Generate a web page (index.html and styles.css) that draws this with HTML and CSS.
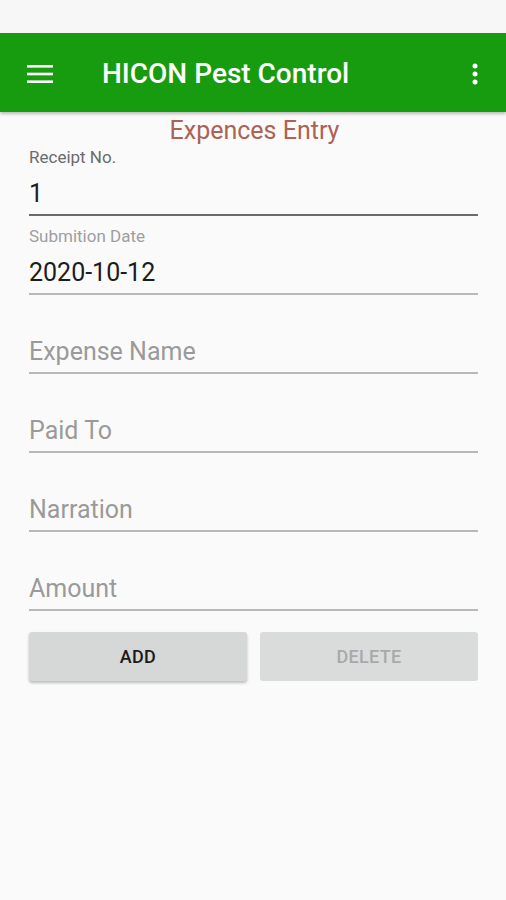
FILE: index.html
```html
<!DOCTYPE html>
<html lang="en">
<head>
  <meta charset="UTF-8" />
  <meta name="viewport" content="width=device-width, initial-scale=1.0" />
  <title>HICON Pest Control | Expences Entry</title>
  <link rel="stylesheet" href="styles.css">
</head>
<body>
  <div class="status-bar"></div>

  <header class="app-bar">
    <button class="icon-btn menu-btn" aria-label="Menu">
      <svg width="26" height="20" viewBox="0 0 26 20">
        <rect x="0" y="1" width="26" height="2.6" fill="#fff" />
        <rect x="0" y="8.7" width="26" height="2.6" fill="#fff" />
        <rect x="0" y="16.4" width="26" height="2.6" fill="#fff" />
      </svg>
    </button>
    <h1 class="app-title">HICON Pest Control</h1>
    <button class="icon-btn more-btn" aria-label="More options">
      <svg width="6" height="22" viewBox="0 0 6 22">
        <circle cx="3" cy="3" r="2.5" fill="#fff" />
        <circle cx="3" cy="11" r="2.5" fill="#fff" />
        <circle cx="3" cy="19" r="2.5" fill="#fff" />
      </svg>
    </button>
  </header>

  <main class="form">
    <h2 class="form-title">Expences Entry</h2>

    <div class="field field-first field-focused">
      <label class="field-label">Receipt No.</label>
      <div class="field-value">1</div>
    </div>

    <div class="field">
      <label class="field-label">Submition Date</label>
      <div class="field-value">2020-10-12</div>
    </div>

    <div class="field">
      <label class="field-label"></label>
      <div class="field-value placeholder">Expense Name</div>
    </div>

    <div class="field">
      <label class="field-label"></label>
      <div class="field-value placeholder">Paid To</div>
    </div>

    <div class="field">
      <label class="field-label"></label>
      <div class="field-value placeholder">Narration</div>
    </div>

    <div class="field">
      <label class="field-label"></label>
      <div class="field-value placeholder">Amount</div>
    </div>

    <div class="actions">
      <button class="btn btn-add">ADD</button>
      <button class="btn btn-delete" disabled>DELETE</button>
    </div>
  </main>
</body>
</html>
```

FILE: styles.css
```css
:root {
  --primary-color: #179b0f;
  --background: #fafafa;
  --heading-color: #ac6254;
  --line-color: #b8b8b8;
  --button-color: #d6d7d7;
}

* {
  box-sizing: border-box;
  margin: 0;
  padding: 0;
}

body {
  font-family: Roboto, 'Noto Sans', sans-serif;
  background: var(--background);
  color: #1c1c1c;
  width: 506px;
  min-height: 900px;
}

.status-bar {
  height: 33px;
  background: #f7f7f7;
}

.app-bar {
  height: 79px;
  background: var(--primary-color);
  display: flex;
  align-items: center;
  padding: 0 28px 0 27px;
  box-shadow: 0 2px 3px rgba(0, 0, 0, 0.25);
  position: relative;
}

.icon-btn {
  background: none;
  border: none;
  display: flex;
  align-items: center;
  cursor: pointer;
}

.menu-btn {
  margin-top: 2px;
}

.app-title {
  flex: 1;
  margin-left: 49px;
  color: #fff;
  font-size: 28px;
  font-weight: 500;
  line-height: 30px;
  margin-top: 2px;
}

.more-btn {
  margin-top: 3px;
}

.form {
  padding: 6px 28px 0 29px;
}

.form-title {
  text-align: center;
  color: var(--heading-color);
  font-size: 25px;
  font-weight: 400;
  line-height: 25px;
  padding-left: 2px;
}

.field {
  padding: 10px 0 5px;
  border-bottom: 2px solid var(--line-color);
}

.field-first {
  padding-top: 4px;
}

.field-focused {
  border-bottom-color: #6a6a6a;
}

.field-label {
  display: block;
  height: 20px;
  font-size: 17px;
  line-height: 20px;
  color: #9e9e9e;
}

.field-focused .field-label {
  color: #6b6b6b;
}

.field-value {
  margin-top: 12px;
  font-size: 25px;
  line-height: 30px;
  height: 30px;
  color: #1c1c1c;
}

.field-value.placeholder {
  color: #9a9a9a;
}

.actions {
  display: flex;
  gap: 13px;
  margin-top: 21px;
}

.btn {
  flex: 1;
  height: 49px;
  border: none;
  border-radius: 3px;
  background: var(--button-color);
  font-family: Roboto, 'Noto Sans', sans-serif;
  font-size: 18px;
  font-weight: 500;
  letter-spacing: 0.3px;
  cursor: pointer;
}

.btn-add {
  color: #1a1a1a;
  box-shadow: 0 2px 3px rgba(0, 0, 0, 0.25);
}

.btn-delete {
  color: #a9a9a9;
  background: #dadbdb;
  cursor: default;
}
```
